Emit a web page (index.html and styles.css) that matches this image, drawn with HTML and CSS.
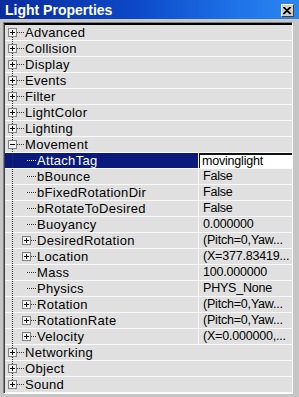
FILE: index.html
```html
<!DOCTYPE html>
<html lang="en">
<head>
    <meta charset="UTF-8">
    <meta name="viewport" content="width=device-width, initial-scale=1.0">
    <title>Light Properties</title>
    <link rel="stylesheet" href="styles.css">
</head>
<body>
    <div class="window">
        <!-- Title bar -->
        <div class="titlebar">
            <span class="title">Light Properties</span>
            <span class="close-btn">
                <svg width="9" height="8" viewBox="0 0 9 8">
                    <path d="M1 0 L8 7 M0 0 L7 7 M7 0 L0 7 M8 0 L1 7" stroke="#000" stroke-width="1.1" fill="none"/>
                </svg>
            </span>
        </div>

        <!-- Property tree -->
        <div class="frame">
            <div class="panel">
                <div class="tree">
                    <div class="row cat"><div class="name"><span class="box plus"></span><span class="dots"></span><span class="label">Advanced</span></div></div>
                    <div class="row cat"><div class="name"><span class="box plus"></span><span class="dots"></span><span class="label">Collision</span></div></div>
                    <div class="row cat"><div class="name"><span class="box plus"></span><span class="dots"></span><span class="label">Display</span></div></div>
                    <div class="row cat"><div class="name"><span class="box plus"></span><span class="dots"></span><span class="label">Events</span></div></div>
                    <div class="row cat"><div class="name"><span class="box plus"></span><span class="dots"></span><span class="label">Filter</span></div></div>
                    <div class="row cat"><div class="name"><span class="box plus"></span><span class="dots"></span><span class="label">LightColor</span></div></div>
                    <div class="row cat"><div class="name"><span class="box plus"></span><span class="dots"></span><span class="label">Lighting</span></div></div>
                    <div class="row cat"><div class="name"><span class="box minus"></span><span class="dots"></span><span class="label">Movement</span></div></div>

                    <div class="row child selected"><div class="name leaf"><span class="dots"></span><span class="label">AttachTag</span></div><div class="val edit">movinglight</div></div>
                    <div class="row child"><div class="name leaf"><span class="dots"></span><span class="label">bBounce</span></div><div class="val">False</div></div>
                    <div class="row child"><div class="name leaf"><span class="dots"></span><span class="label">bFixedRotationDir</span></div><div class="val">False</div></div>
                    <div class="row child"><div class="name leaf"><span class="dots"></span><span class="label">bRotateToDesired</span></div><div class="val">False</div></div>
                    <div class="row child"><div class="name leaf"><span class="dots"></span><span class="label">Buoyancy</span></div><div class="val">0.000000</div></div>
                    <div class="row child"><div class="name"><span class="box plus"></span><span class="dots"></span><span class="label">DesiredRotation</span></div><div class="val">(Pitch=0,Yaw...</div></div>
                    <div class="row child"><div class="name"><span class="box plus"></span><span class="dots"></span><span class="label">Location</span></div><div class="val">(X=377.83419...</div></div>
                    <div class="row child"><div class="name leaf"><span class="dots"></span><span class="label">Mass</span></div><div class="val">100.000000</div></div>
                    <div class="row child"><div class="name leaf"><span class="dots"></span><span class="label">Physics</span></div><div class="val">PHYS_None</div></div>
                    <div class="row child"><div class="name"><span class="box plus"></span><span class="dots"></span><span class="label">Rotation</span></div><div class="val">(Pitch=0,Yaw...</div></div>
                    <div class="row child"><div class="name"><span class="box plus"></span><span class="dots"></span><span class="label">RotationRate</span></div><div class="val">(Pitch=0,Yaw...</div></div>
                    <div class="row child"><div class="name"><span class="box plus"></span><span class="dots"></span><span class="label">Velocity</span></div><div class="val">(X=0.000000,...</div></div>

                    <div class="row cat"><div class="name"><span class="box plus"></span><span class="dots"></span><span class="label">Networking</span></div></div>
                    <div class="row cat"><div class="name"><span class="box plus"></span><span class="dots"></span><span class="label">Object</span></div></div>
                    <div class="row cat"><div class="name"><span class="box plus"></span><span class="dots"></span><span class="label">Sound</span></div></div>

                    <!-- dotted line joining the top level items -->
                    <div class="tree-line"></div>
                </div>
            </div>
        </div>
    </div>
</body>
</html>
```

FILE: styles.css
```css
* {
    box-sizing: border-box;
}

body {
    margin: 0;
    padding: 0;
    background-color: #c6c6c6;
    font-family: "Liberation Sans", Arial, sans-serif;
    color: #000;
}

.window {
    width: 299px;
    height: 397px;
    background-color: #c6c6c6;
    overflow: hidden;
}

/* Title bar */
.titlebar {
    height: 19px;
    display: flex;
    justify-content: space-between;
    align-items: flex-start;
    background: linear-gradient(90deg, #0a2c9e 0%, #0c48c8 45%, #1f74e8 80%, #2c86f0 100%);
}

.title {
    color: #fff;
    font-weight: bold;
    font-size: 14px;
    line-height: 19px;
    padding: 1px 0 0 5px;
    white-space: nowrap;
}

.close-btn {
    width: 13px;
    height: 13px;
    margin: 4px 5px 0 0;
    background-color: #d4d0c8;
    border-top: 1px solid #fff;
    border-left: 1px solid #fff;
    border-right: 1px solid #404040;
    border-bottom: 1px solid #404040;
    display: flex;
    align-items: center;
    justify-content: center;
}

/* Frame around the tree */
.frame {
    padding: 3px 6px 3px 3px;
}

.panel {
    border-top: 1px solid #808080;
    border-left: 1px solid #808080;
    border-right: 1px solid #fff;
    border-bottom: 1px solid #fff;
}

.tree {
    position: relative;
    border-top: 2px solid #000;
    border-left: 1px solid #404040;
    background-color: #e0e0e0;
    font-size: 13px;
}

.row {
    display: flex;
    height: 16px;
    border-bottom: 1px solid #fafafa;
    overflow: hidden;
}

.name {
    display: flex;
    align-items: center;
    width: 193px;
    flex-shrink: 0;
    overflow: hidden;
}

.row.cat .name {
    flex: 1;
    padding-left: 3px;
}

.row.child .name {
    padding-left: 17px;
}

.row.child .name.leaf {
    padding-left: 22px;
}

.label {
    line-height: 15px;
    letter-spacing: 0.3px;
    white-space: nowrap;
}

/* Plus / minus boxes */
.box {
    position: relative;
    z-index: 2;
    width: 9px;
    height: 9px;
    flex-shrink: 0;
    border: 1px solid #808080;
    background-color: #f2f2f2;
}

.box::before {
    content: "";
    position: absolute;
    left: 1px;
    top: 3px;
    width: 5px;
    height: 1px;
    background-color: #000;
}

.box.plus::after {
    content: "";
    position: absolute;
    left: 3px;
    top: 1px;
    width: 1px;
    height: 5px;
    background-color: #000;
}

/* Dotted connectors */
.dots {
    width: 7px;
    height: 1px;
    margin-right: 1px;
    flex-shrink: 0;
    background-image: linear-gradient(to right, #333 50%, transparent 50%);
    background-size: 2px 1px;
}

.row.child .dots {
    width: 5px;
}

.row.child .name.leaf .dots {
    width: 9px;
}

.tree-line {
    position: absolute;
    z-index: 1;
    left: 7px;
    top: 8px;
    width: 1px;
    height: 352px;
    background-image: linear-gradient(to bottom, #333 50%, transparent 50%);
    background-size: 1px 2px;
}

/* Value column */
.val {
    flex: 1;
    border-left: 1px solid #f4f4f4;
    padding-left: 4px;
    font-size: 12.5px;
    letter-spacing: -0.2px;
    line-height: 15px;
    white-space: nowrap;
    overflow: hidden;
}

.row.selected .name {
    background-color: #0a1a7c;
    color: #fff;
}

.row.selected .dots {
    background-image: linear-gradient(to right, #fff 50%, transparent 50%);
}

.val.edit {
    background-color: #fff;
    box-shadow: inset 1px 2px 0 #111;
    padding-left: 3px;
    line-height: 16px;
}
```
